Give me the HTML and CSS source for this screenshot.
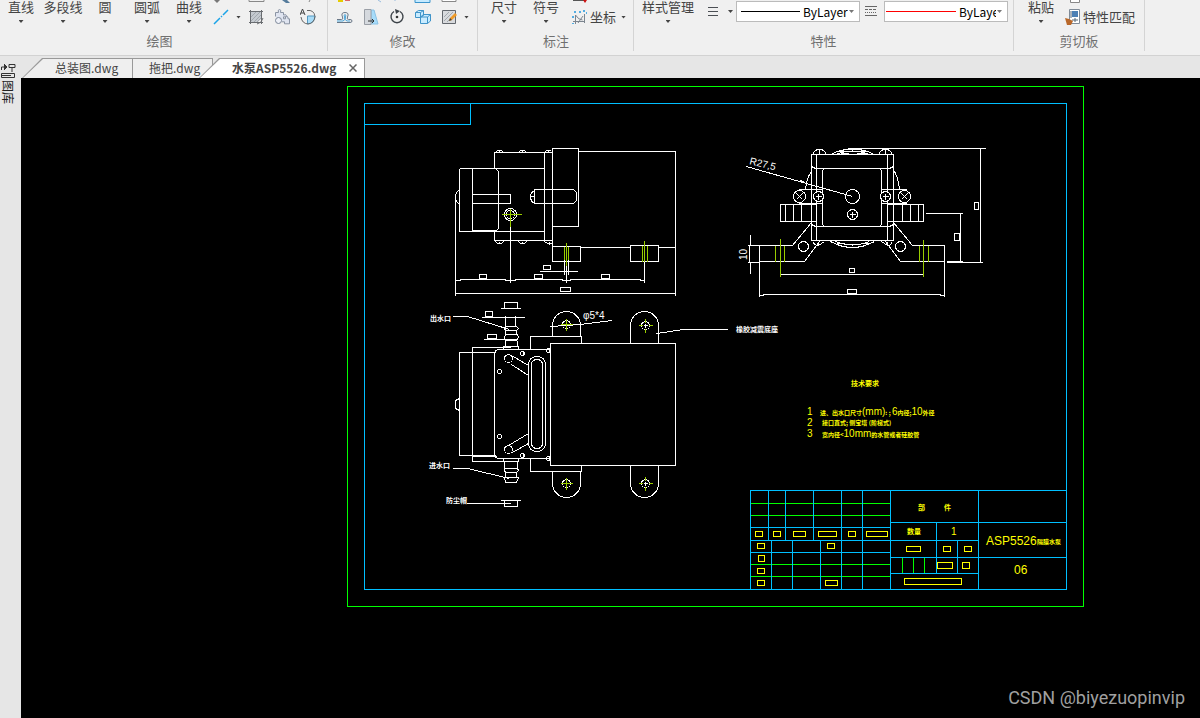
FILE: index.html
```
<!DOCTYPE html>
<html lang="zh-CN">
<head>
<meta charset="utf-8">
<title>水泵ASP5526.dwg</title>
<link rel="stylesheet" href="styles.css">
</head>
<body>
<header class="ribbon">
  <section class="group group-draw">
    <div class="tools">
      <button class="tool">直线<i class="caret"></i></button>
      <button class="tool">多段线<i class="caret"></i></button>
      <button class="tool">圆<i class="caret"></i></button>
      <button class="tool">圆弧<i class="caret"></i></button>
      <button class="tool">曲线<i class="caret"></i></button>
      <div class="icons">
        <svg class="strip" viewBox="0 0 112 5" width="112" height="5"><path d="M1 0l3 3 3-3" fill="#777"/><path d="M36 0v1.500h15V0" fill="none" stroke="#888"/><path d="M69 0h5l3 3h-4z" fill="#567c9c"/><path d="M97 0l-1 2" stroke="#888"/></svg>
        <div class="icon-row">
          <button class="icon" aria-label="构造线"><svg viewBox="0 0 16 16"><path d="M1 15l6-6M8 8l1-1M10 6l5-5" stroke="#1aa3e8" stroke-width="1.500" fill="none"/></svg></button>
          <i class="caret"></i>
          <button class="icon" aria-label="填充"><svg viewBox="0 0 16 16"><path d="M3 3h10v7l-3 3H3z" fill="#c5cad0"/><path d="M3 12l9-9M3 8l5-5M6 13l7-7M9 13l4-4" stroke="#a2a8ae"/><path d="M1 2.500h14M1 13.500h14M2.500 1v14M13.500 1v14" stroke="#696c70"/><path d="M15 9q-1 5-6 6" fill="none" stroke="#696c70"/></svg></button>
          <button class="icon" aria-label="面域"><svg viewBox="0 0 16 16"><path d="M1.500 7.500v-4h3q-1-3 1-3t1 3h3v2.500q3-1 3 .8t-3 1v2h2q-.5-2.500 1.200-2.500t1.300 2.500h1.500v5h-5v-2H8" fill="#dfe4f0" stroke="#8b94a4"/><circle cx="4.500" cy="11.500" r="3" fill="#eef1f8" stroke="#7c8798"/></svg></button>
          <button class="icon" aria-label="擦除"><svg viewBox="0 0 16 16"><path d="M7.500 7H15q0 7-7.500 8z" fill="#a9dcf8" stroke="#5599c0"/><path d="M7 1.500q7-1 8 6-1 7-7 7.500-6-.5-7-7" fill="none" stroke="#666"/><path d="M0 6l2.500-6L5 6M1 4h3" fill="none" stroke="#444"/></svg></button>
        </div>
      </div>
    </div>
    <h2>绘图</h2>
  </section>
  <section class="group group-modify">
    <div class="tools">
      <div class="icons">
        <svg class="strip" viewBox="0 0 140 5" width="140" height="5"><path d="M1 0h5v2H1z" fill="#e6cc00"/><path d="M8 0h5v1H8z" fill="#d66"/><path d="M41 0l3 2M58 0v1" stroke="#9bd"/><path d="M78 0v2.500h15V0" fill="#c5eaff" stroke="#3b94cc"/><path d="M105 0v1.500h14V0" fill="#fff" stroke="#888"/></svg>
        <div class="icon-row">
          <button class="icon" aria-label="偏移"><svg viewBox="0 0 16 16"><path d="M0 10.500h4.500q2 0 1-2.500Q3.500 3.500 8 3.500T10.500 8q-1 2.500 1 2.500H13q2 0 2 1.500t-2 1.500H0" fill="none" stroke="#6a7888"/><path d="M0 12h6q3-1 1.500-4-1-2.500.5-2.500T8.500 8Q7 11 10 12h3" fill="none" stroke="#4da5d8"/></svg></button>
          <button class="icon" aria-label="拉伸"><svg viewBox="0 0 16 16"><path d="M8 1h3l4 14H8z" fill="#a7dcfa" stroke="#8ac2e5"/><path d="M1.500 .5H8v15H1.500z" fill="#d5d9de" stroke="#9a9fa6"/><path d="M5 12h6M9 10l2 2-2 2" fill="none" stroke="#333"/></svg></button>
          <button class="icon" aria-label="旋转"><svg viewBox="0 0 16 16"><path d="M11 2.500a6 6 0 1 1-6 0" fill="none" stroke="#3c4248" stroke-width="1.400"/><path d="M6 0l5 2-4 3z" fill="#3c4248"/><circle cx="8" cy="8" r="1.300" fill="#333"/></svg></button>
          <button class="icon" aria-label="阵列"><svg viewBox="0 0 16 16"><path d="M.5 3.500l3-2h5v5l-3 2h-5zM5.500 8l3-2.500h7V12l-3 2.500h-7z" fill="#c8ebff" stroke="#3f93c8"/><path d="M.5 3.500h5v5M5.500 3.500l3-2M5.500 8h7v6.500M12.500 8l3-2.500" fill="none" stroke="#3f93c8"/></svg></button>
          <button class="icon" aria-label="编辑填充"><svg viewBox="0 0 16 16"><path d="M2 2h12v12H2z" fill="#d8dadd"/><path d="M3 12l9-9M3 8l5-5M6 13l7-7" stroke="#a2a8ae"/><path d="M1.500 1.500h13v13h-13z" fill="none" stroke="#62676d"/><path d="M8 12l1-3 5-5 2 2-5 5z" fill="#f09a26"/><path d="M8 12l1-3 2 2z" fill="#444"/></svg></button>
          <i class="caret"></i>
        </div>
      </div>
    </div>
    <h2>修改</h2>
  </section>
  <section class="group group-annotate">
    <div class="tools">
      <button class="tool">尺寸<i class="caret"></i></button>
      <button class="tool">符号<i class="caret"></i></button>
      <div class="icons">
        <svg class="strip" viewBox="0 0 20 5" width="20" height="5"><path d="M1 .5h13" stroke="#555"/><path d="M11 0h4l-2 3z" fill="#c11"/></svg>
        <button class="labelled"><svg viewBox="0 0 16 16"><path d="M3.500 6v9M1 12.500h12M3.500 6q3 5 7 5M12.500 5v9M11 7l-5 7" fill="none" stroke="#7c858f"/><path d="M3 2v2M0 8h2M7 3h2M12 1v2M14 4h1M1 14v1" stroke="#2196dd" stroke-width="1.500"/></svg>坐标<i class="caret"></i></button>
      </div>
    </div>
    <h2>标注</h2>
  </section>
  <section class="group group-props">
    <div class="tools">
      <button class="tool">样式管理<i class="caret"></i></button>
      <button class="lines" aria-label="线宽"><svg viewBox="0 0 10 10" width="10" height="10"><path d="M0 1.500h10M0 5.500h10M0 9.500h10" stroke="#4b4f54"/></svg></button>
      <i class="caret"></i>
      <label class="combo"><svg class="sample" viewBox="0 0 60 1" preserveAspectRatio="none"><path d="M0 0H60V1H0z" fill="#000"/></svg><select aria-label="线型"><option>ByLayer</option></select><i class="caret"></i></label>
      <button class="lines" aria-label="线型列表"><svg viewBox="0 0 12 12" width="12" height="12"><path d="M0 1.500h12M0 10.500h12" stroke="#666"/><path d="M0 4.500h12" stroke="#666" stroke-dasharray="3 1"/><path d="M0 7.500h12" stroke="#666" stroke-dasharray="1 1"/></svg></button>
      <label class="combo combo-red"><svg class="sample" viewBox="0 0 60 1" preserveAspectRatio="none"><path d="M0 0H60V1H0z" fill="#f00"/></svg><select aria-label="颜色"><option>ByLayer</option></select><i class="caret"></i></label>
    </div>
    <h2>特性</h2>
  </section>
  <section class="group group-clip">
    <div class="tools">
      <button class="tool">粘贴<i class="caret"></i></button>
      <div class="icons">
        <svg class="strip" viewBox="0 0 20 5" width="20" height="5"><path d="M5.500 0v2.500h9V0" fill="#fff" stroke="#888"/></svg>
        <button class="labelled"><svg viewBox="0 0 16 16"><path d="M4.500 .5h10v14h-10z" fill="#fff" stroke="#7f8a97"/><path d="M7 2h6v6H7z" fill="#4c80b5"/><path d="M6 2v7M7 11h6M10 9v4" stroke="#567"/><path d="M0 9l4 1 4 2-2 4H2z" fill="#b9682a"/></svg>特性匹配</button>
      </div>
    </div>
    <h2>剪切板</h2>
  </section>
</header>
<div class="workspace">
  <aside class="rail">
    <svg viewBox="0 0 16 18" width="16" height="18" fill="none" stroke="#333"><path d="M1.500 8V5h4"/><path d="M4 2l3 3-3 3" fill="#333"/><path d="M9 2.500h6v3H9zM12 5v5"/><path d="M1.500 11.500h13v4h-13zM1 13.500h10"/></svg>
    <span>图库</span>
  </aside>
  <main class="document">
    <nav class="tabs">
      <button class="tab slant"><span>总装图.dwg</span></button>
      <button class="tab"><span>拖把.dwg</span></button>
      <button class="tab slant active"><span>水泵ASP5526.dwg</span><svg viewBox="0 0 8 8" width="8" height="8"><path d="M.5 .5l7 7M7.500 .5l-7 7" stroke="#666" stroke-width="1.500"/></svg></button>
    </nav>
    <div class="canvas">
      <svg class="drawing" viewBox="21 78 1179 640">
        <g transform="translate(.5 .5)" class="ink">
          <path class="green" d="M347 86H1083V606H347z"/>
          <path class="blue" d="M364 103H1066V589H364zM364 124H470V103"/>

          <!-- side view -->
          <path d="M494 168V152H552M459 168H544M459 231H544M459 168V231M472 168V231M495 168L498 171V228L495 231M472 230H496M494 231V240H552M544 152V240M551 148H578V226H552M552 148V261M578 151H675V295M552 246H580V261H552M580 247H630M658 247H675M630 245H658V261H630zM472 194H510V203H472M459 190Q455 191 455 197Q455 202 459 203M455 195V295M455 293H675"/>
          <path d="M534 189H573L576 192V200L573 203H534zM534 190Q530 192 530 196Q530 201 534 203M530 196H533"/>
          <circle cx="510" cy="214" r="6"/><circle cx="510" cy="214" r="4"/>
          <path d="M495 152L497 150H501L503 152M499 149V152M518 152L520 150H524L526 152M522 149V152M544 152L546 150H550M548 149V152M495 241L497 243H501L503 241M499 241V243M518 241L520 243H524L526 241M522 241V243M544 241L547 243H552M549 241V244"/>
          <path d="M510 226V282M564 259V274M566 265V282M568 259V274M644 261V282M455 280H460V279H505V280H515V279H562V280H570V279H640V280H644M539 271H577M479 274H486V278H479zM534 274H542V278H534zM601 274H609V278H601zM543 265H550V269H543zM560 287H570V291H560z"/>
          <path class="lime" d="M501 214H521M510 208V226M564 246V259M566 242V265M568 246V259M642 245V261M644 240V261M647 245V261"/>

          <!-- front view -->
          <path d="M811 154H893V240H811zM816 154V240M887 154V240M811 166L815 168H889L893 166M811 224L815 226H889L893 224M824 168L822 170V224L824 226M879 168L881 170V224L879 226M811 171Q806 177 805 189M894 171Q898 178 899 189"/>
          <path d="M798 189H822M798 203H822M881 189H906M881 203H906M780 204H816V221H780zM785 204V221M793 204V221M801 204V221M887 204H923V221H887zM902 204V221M910 204V221M918 204V221"/>
          <g class="solid"><circle cx="799" cy="196" r="6"/><circle cx="818" cy="196" r="5"/><circle cx="885" cy="196" r="5"/><circle cx="904" cy="196" r="6"/></g>
          <circle cx="852" cy="196" r="7"/><circle cx="852" cy="214" r="5"/><circle cx="803" cy="246" r="5"/><circle cx="900" cy="246" r="5"/>
          <path d="M796 193L802 199M802 193L796 199M901 193L907 199M907 193L901 199M815 196H821M818 193V199M882 196H888M885 193V199M849 214H855M852 211V217M746 166L852 196M800 180L804 182"/>
          <path d="M830 154Q852 143 874 154M835 154Q852 147 869 154M836 151H868M840 153H848M856 153H864M830 241Q852 253 874 241M835 241Q852 248 869 241M836 243H844M860 243H868M813 154Q813 149 819 149Q825 149 825 154M819 149V154M879 154Q879 149 885 149Q891 149 891 154M885 149V154M813 241Q813 245 818 245L824 241M818 241V245M881 241L887 245Q891 245 891 241M887 241V245"/>
          <path d="M811 222L792 245H747M759 245V296M759 261H804L819 241M893 222L912 245H944V296M944 261H900L885 241"/>
          <path d="M780 274H923M849 268H854V272H849zM759 295H763V294H940V295H944M847 289H856V293H847zM750 234V245M749 245V262M750 262V273M747 262H759M847 148H985M980 148V262M946 262H982M925 213H962M960 213V261M946 261H962M974 202H978V209H974zM954 233H959V240H954z"/>
          <path class="lime" d="M775 245V261M780 238V276M784 245V261M919 245V261M923 239V276M928 245V261"/>

          <!-- top view -->
          <path d="M550 343H675V465H550zM530 349V336H581V343M530 458V471H581V465M552 336V325A14 14 0 0 1 580 325V336M630 343V325A14 14 0 0 1 658 325V343M552 471V483A14 14 0 0 0 580 483V471M630 465V483A14 14 0 0 0 658 483V465"/>
          <path d="M495 352H459V455H495M510 347H472V461H510M472 456H496M459 398L455 400V408L459 410M550 349H499Q494 349 494 354V453Q494 458 499 458H550"/>
          <rect x="528" y="356" width="17" height="95" rx="8"/><rect x="531" y="359" width="11" height="89" rx="5"/>
          <circle cx="508" cy="358" r="4"/><circle cx="508" cy="449" r="4"/><path d="M511 355L528 365M511 364L528 375M528 433L508 445M528 443L512 452"/>
          <circle cx="522" cy="353" r="2"/><circle cx="522" cy="455" r="2"/><circle cx="548" cy="350" r="2"/><circle cx="548" cy="458" r="2"/><circle cx="499" cy="371" r="2"/><circle cx="499" cy="436" r="2"/>
          <path d="M523 351V355M523 453V457M549 348V352M549 456V460"/>
          <path d="M504 302H517V308H504zM500 308H520M481 317H524M505 315V326M515 315V326M505 326H516L518 328L516 330H505L504 328zM505 330V334M516 330V334M505 334H517L518 337L516 340H504M505 334L504 337L505 340V346M483 339H517M517 340V346M503 349V346H518V349M485 311H492V316H485zM487 334H496V338H487z"/>
          <path d="M503 458V461H518V458M504 461V468M517 461V468M504 468H517L518 470L516 472H505L504 470zM505 472V476M516 472V476M504 477H518L516 482H505zM504 500H517V506H504zM500 500H520"/>
          <path d="M452 316H467L509 329M452 468H467L509 478M466 503H510M550 326L580 324L612 320M656 333L683 329H727"/>
          <circle cx="566" cy="324" r="4"/><circle cx="645" cy="325" r="4"/><circle cx="566" cy="483" r="4"/><circle cx="645" cy="483" r="4"/>
          <path d="M643 325H647M645 323V327M643 483H647M645 481V485"/>
          <path class="lime" d="M560 324H572M566 318V330M560 483H572M566 477V489M638 325H642M648 325H652M645 318V322M645 328V332M638 483H642M648 483H652M645 476V480M645 486V490"/>

          <!-- title block -->
          <path class="green" d="M750 503H890M750 515H890M750 564H890M750 576H890M902 557V573M913 557V573M924 557V573"/>
          <path class="blue" d="M750 589V490H1066M768 490V540M785 490V540M813 490V540M841 490V589M862 490V589M890 490V589M771 540V589M792 540V589M820 540V589M750 527H890M750 540H890M750 552H890M978 490V589M890 522H1066M890 540H978M890 557H1066M890 573H978M936 522V573M957 540V573"/>
          <path class="yellow" d="M755 531H762V536H755zM773 531H780V536H773zM793 531H805V536H793zM818 531H836V536H818zM848 531H855V536H848zM866 531H887V536H866zM757 543H764V548H757zM827 543H834V548H827zM758 555H764V561H758zM757 568H764V573H757zM757 580H764V585H757zM825 580H837V585H825zM906 546H920V551H906zM943 546H950V551H943zM964 546H971V551H964zM937 562H952V568H937zM962 562H969V568H962zM904 578H961V584H904z"/>
        </g>
        <g class="notes">
          <text x="430" y="321">出水口</text>
          <text x="429" y="468">进水口</text>
          <text x="446" y="503">防尘帽</text>
          <text x="736" y="332">橡胶减震底座</text>
          <text class="num" x="583" y="319">φ5*4</text>
          <text class="num" transform="translate(749 164) rotate(14)">R27,5</text>
          <text class="num" transform="translate(747 260) rotate(-90)">10</text>
        </g>
        <g class="notes gold">
          <text x="851" y="386">技术要求</text>
          <text class="num" x="807" y="415">1</text>
          <text class="num" x="807" y="426">2</text>
          <text class="num" x="807" y="437">3</text>
          <text class="tiny" x="820" y="415">进、出水口尺寸<tspan class="num">(mm)</tspan>: ; <tspan class="num">6</tspan>内径;<tspan class="num">10</tspan>外径</text>
          <text class="tiny" x="822" y="425">接口直式; 侧宝塔 (阶梯式)</text>
          <text class="tiny" x="822" y="437">宽内径&lt;<tspan class="num">10mm</tspan>的水管或者硅胶管</text>
          <text x="918" y="510">部</text>
          <text x="944" y="510">件</text>
          <text x="907" y="534">数量</text>
          <text class="num" x="951" y="535">1</text>
          <text class="num big" x="986" y="545">ASP5526</text>
          <text x="1037" y="544" class="tiny">隔膜水泵</text>
          <text class="num big" x="1014" y="574">06</text>
        </g>
      </svg>
      <p class="watermark">CSDN @biyezuopinvip</p>
    </div>
  </main>
</div>
</body>
</html>
```
FILE: styles.css
```
* { box-sizing: border-box; }
html, body { height: 100%; }
body {
  margin: 0;
  display: flex;
  flex-direction: column;
  background: #e6e6e6;
  color: #444;
  font: 13px/16px "Noto Sans CJK SC", sans-serif;
  overflow: hidden;
}
button {
  border: 0;
  padding: 0;
  background: none;
  color: inherit;
  font: inherit;
  white-space: nowrap;
}
svg { display: block; flex: none; }

.ribbon {
  display: flex;
  flex: none;
  background: #f0f0f0;
  border-bottom: 1px solid #d2d2d2;
  padding-bottom: 4px;
}
.group {
  display: flex;
  flex-direction: column;
  flex: none;
  border-right: 1px solid #d4d4d4;
}
.group-draw { width: 328px; }
.group-draw h2 { padding-right: 8px; }
.group-modify { width: 150px; padding-left: 9px; }
.group-modify h2 { padding-right: 9px; }
.group-annotate { width: 156px; padding-left: 5px; }
.group-annotate h2 { padding-right: 4px; }
.group-props { width: 380px; padding-left: 6px; }
.group-props h2 { padding-right: 6px; }
.group-clip { width: 131px; padding-left: 6px; }
.group-clip h2 { padding-right: 6px; }
.tools { display: flex; height: 33px; }
.group h2 {
  margin: 0;
  padding-bottom: 2px;
  text-align: center;
  font-size: 13px;
  font-weight: 400;
  line-height: 16px;
  color: #707070;
}
.tool {
  display: flex;
  flex: none;
  flex-direction: column;
  align-items: center;
  width: 42px;
  height: 23px;
  gap: 6px;
  line-height: 14px;
}
.group-props .tool { width: 56px; margin-right: 12px; }
.caret {
  flex: none;
  width: 5px;
  height: 3px;
  background: #444;
  clip-path: polygon(0 0, 100% 0, 50% 100%);
}
.icons { display: flex; flex: none; flex-direction: column; gap: 4px; }
.group-draw .icons { padding-left: 3px; }
.icon-row { display: flex; align-items: center; gap: 10px; }
.group-draw .icon-row .caret { margin: 0 -3px; }
.icon svg, .labelled svg { width: 16px; height: 16px; }
.group-modify .caret { margin-left: -3px; }
.labelled { display: flex; align-items: center; gap: 2px; line-height: 14px; }
.labelled .caret { margin-left: 3px; }
.group-annotate .icons { padding-left: 5px; }
.group-clip .icons { padding-left: 3px; }
.lines { height: 22px; }
.lines + .caret { margin: 10px 3px 0 10px; }
.combo {
  position: relative;
  display: flex;
  align-items: center;
  flex: none;
  width: 124px;
  height: 21px;
  margin-top: 1px;
  border: 1px solid #bbb;
  background: #fff;
}
.combo + .lines { margin: 0 7px 0 5px; }
.sample { width: 59px; height: 1px; margin-left: 4px; }
.combo-red .sample { width: 70px; margin-left: 1px; }
.combo select {
  flex: 1;
  min-width: 0;
  margin: 0 11px 0 3px;
  border: 0;
  padding: 0;
  background: none;
  appearance: none;
  color: #000;
  font: 12px/18px "Noto Sans CJK SC", sans-serif;
}
.combo .caret { position: absolute; right: 5px; background: #777; }

.workspace { display: flex; flex: 1; min-height: 0; }
.rail {
  width: 21px;
  flex: none;
  padding-top: 6px;
  color: #222;
}
.rail span {
  display: block;
  writing-mode: vertical-rl;
  text-orientation: sideways;
  font-size: 12px;
}
.document { display: flex; flex-direction: column; flex: 1; min-width: 0; }
.tabs { display: flex; flex: none; padding: 2px 0 0 1px; }
.tab {
  position: relative;
  height: 20px;
  width: 80px;
  padding-left: 16px;
  display: flex;
  align-items: center;
  background: #999;
  font-size: 12px;
  line-height: 18px;
}
.tab::before {
  content: "";
  position: absolute;
  inset: 1px 1px 0 0;
  background: #efefef;
}
.tab span, .tab svg { position: relative; }
.slant { width: 111px; padding-left: 33px; clip-path: polygon(20px 0, 100% 0, 100% 100%, 0 100%); }
.slant::before { left: 1px; clip-path: polygon(20px 0, 100% 0, 100% 100%, 0 100%); }
.active {
  width: 166px;
  margin-left: -14px;
  gap: 12px;
  z-index: 1;
  font-weight: 700;
}
.active::before { background: #fff; }
.canvas { position: relative; flex: 1; min-height: 0; background: #000; overflow: hidden; }
.drawing { width: 100%; }
.ink { fill: none; stroke: #fff; stroke-width: 1px; shape-rendering: crispEdges; }
.solid { fill: #000; }
.green { stroke: #0f0; }
.blue { stroke: #00bfff; }
.lime { stroke: #9c0; }
.yellow { stroke: #ff0; }
.notes { fill: #fff; font: 700 7px "Noto Sans CJK SC", sans-serif; }
.gold { fill: #ff0; }
.tiny { font-size: 6px; }
.num { font: 400 10px "Liberation Sans", sans-serif; }
.big { font-size: 12px; }
.watermark {
  position: absolute;
  right: 15px;
  bottom: 8px;
  margin: 0;
  color: #a0a0a0;
  font: 18px/24px Roboto, sans-serif;
}
```
